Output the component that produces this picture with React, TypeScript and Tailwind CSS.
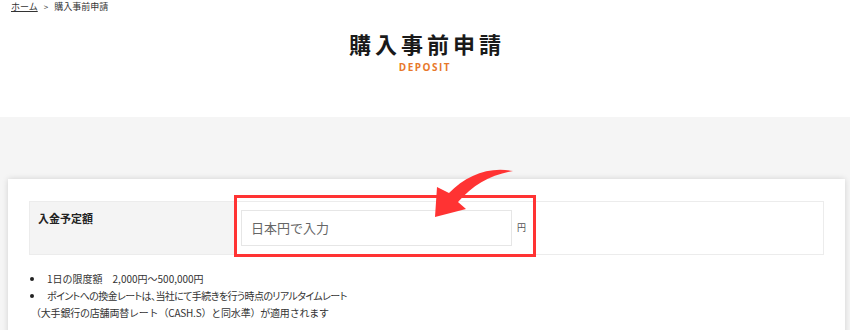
const notes = [
  { text: '1日の限度額　2,000円～500,000円', cls: '' },
  { text: 'ポイントへの換金レートは、当社にて手続きを行う時点のリアルタイムレート', cls: "[font-feature-settings:'palt'] tracking-[-0.6px]" },
];

function CurvedArrow() {
  // red curved arrow pointing at the input
  return (
    <svg
      className="absolute left-[400px] top-[-34px] pointer-events-none"
      width="90"
      height="60"
      viewBox="430 168 90 60"
    >
      <path
        d="M513 171 C490 166 466 175 449 193 L437 187 L435 217 L466 209 L458 202 C473 185 490 175 513 171 Z"
        fill="#ff3333"
      />
    </svg>
  );
}

export default function App() {
  return (
    <div className="w-[850px] h-[330px] overflow-hidden bg-white text-[#333] font-['Noto_Sans_CJK_JP',sans-serif]">
      {/* Header */}
      <div className="h-[117px] bg-white">
        <div className="flex items-center gap-[6px] pl-[11px] pt-[1px] text-[9px] leading-[11px] text-[#333]">
          <span className="underline">ホーム</span>
          <span className="text-[8px]">&gt;</span>
          <span>購入事前申請</span>
        </div>
        <div className="flex flex-col items-center pt-[18px]">
          <h1 className="text-[22px] leading-[26px] font-bold tracking-[4px] pl-[4px] text-[#1a1a1a]">購入事前申請</h1>
          <p className="mt-[5px] text-[10px] leading-[13px] font-bold tracking-[1.5px] text-[#e8782a] font-['Open_Sans',sans-serif]">
            DEPOSIT
          </p>
        </div>
      </div>

      {/* Gray section */}
      <div className="bg-[#f5f5f5] pt-[62px] h-[213px]">
        <div className="ml-2 mr-[5px] bg-white shadow-[0_0_6px_rgba(0,0,0,0.15)] px-[21px] pt-[22px] h-[200px]">
          <div className="relative flex h-[54px] border border-[#ececec]">
            <div className="w-[205px] bg-[#f4f4f4] pl-[8px] pt-[9px] text-[11px] font-bold leading-[14px] text-[#222]">
              入金予定額
            </div>
            <div className="flex items-center gap-[5px] pl-[6px]">
              <div className="flex h-[36px] w-[271px] items-center border border-[#e6e6e6] bg-white pl-[9px] text-[13px] text-[#666]">
                日本円で入力
              </div>
              <span className="text-[9px] text-[#555]">円</span>
            </div>
            <div className="absolute left-[204px] top-[-7px] h-[62px] w-[302px] border-[3px] border-[#ff3333] pointer-events-none" />
            <CurvedArrow />
          </div>

          <ul className="mt-[15px] text-[10px] leading-[17px] text-[#333]">
            {notes.map((n) => (
              <li key={n.text} className="flex items-center">
                <span className="ml-[1px] mr-[13px] inline-block h-[4px] w-[4px] rounded-full bg-[#222]" />
                <span className={n.cls}>{n.text}</span>
              </li>
            ))}
            <li className="pl-[2px] tracking-[-0.2px]">（大手銀行の店舗両替レート（CASH.S）と同水準）が適用されます</li>
          </ul>
        </div>
      </div>
    </div>
  );
}
